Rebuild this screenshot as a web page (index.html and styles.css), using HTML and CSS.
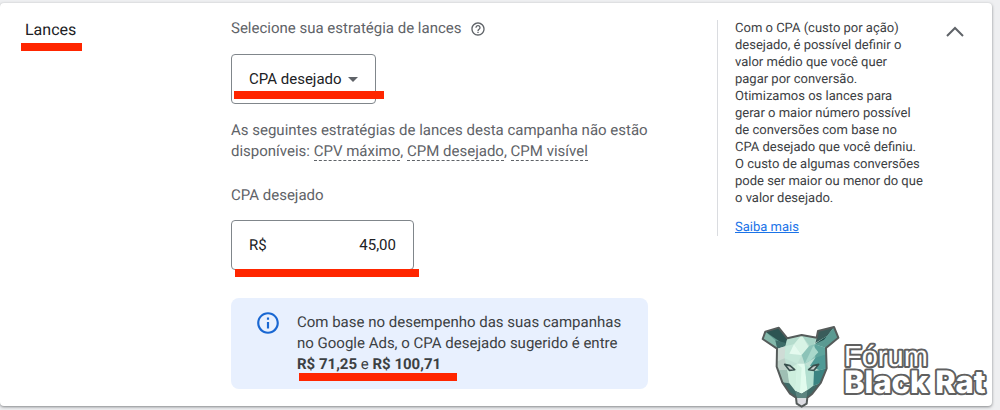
FILE: index.html
```
<!DOCTYPE html>
<html lang="pt-BR">
<head>
    <meta charset="UTF-8">
    <meta name="viewport" content="width=device-width, initial-scale=1.0">
    <title>Lances</title>
    <link rel="stylesheet" href="styles.css">
</head>
<body>
    <section class="card">
        <h2><span class="marked mark-title">Lances</span></h2>

        <!-- Bidding form -->
        <form class="bidding">
            <div class="label-row">
                <label for="strategy">Selecione sua estratégia de lances</label>
                <button type="button" class="icon-button" aria-label="Ajuda">
                    <svg width="16" height="16" viewBox="0 0 24 24" fill="#5f6368">
                        <path d="M11 18h2v-2h-2v2zm1-16C6.480 2 2 6.480 2 12s4.480 10 10 10 10-4.480 10-10S17.520 2 12 2zm0 18c-4.410 0-8-3.590-8-8s3.590-8 8-8 8 3.590 8 8-3.590 8-8 8zm0-14c-2.210 0-4 1.790-4 4h2c0-1.100.9-2 2-2s2 .9 2 2c0 2-3 1.750-3 5h2c0-2.250 3-2.500 3-5 0-2.210-1.790-4-4-4z"/>
                    </svg>
                </button>
            </div>
            <div class="select-box marked mark-select">
                <select id="strategy">
                    <option>CPA desejado</option>
                </select>
                <svg class="arrow" width="10" height="5" viewBox="0 0 10 5"><path d="M0 0h10L5 5z" fill="#5f6368"/></svg>
            </div>
            <p class="unavailable">As seguintes estratégias de lances desta campanha não estão disponíveis: <span class="term">CPV máximo</span>, <span class="term">CPM desejado</span>, <span class="term">CPM visível</span></p>
            <label class="target-label" for="target">CPA desejado</label>
            <div class="money-box marked mark-money">
                <span>R$</span>
                <input type="text" id="target" value="45,00">
            </div>
            <div class="info">
                <svg width="26" height="26" viewBox="0 0 24 24" fill="#1967d2">
                    <path d="M11 7h2v2h-2zM11 11h2v6h-2zM12 2C6.480 2 2 6.480 2 12s4.480 10 10 10 10-4.480 10-10S17.520 2 12 2zm0 18c-4.410 0-8-3.590-8-8s3.590-8 8-8 8 3.590 8 8-3.590 8-8 8z"/>
                </svg>
                <p>Com base no desempenho das suas campanhas no Google Ads, o CPA desejado sugerido é entre<br>
                <span class="marked mark-range"><strong>R$ 71,25</strong> e <strong>R$ 100,71</strong></span></p>
            </div>
        </form>

        <!-- Help text -->
        <aside class="help">
            <p>Com o CPA (custo por ação) desejado, é possível definir o valor médio que você quer<br>pagar por conversão.<br>Otimizamos os lances para<br>gerar o maior número possível<br>de conversões com base no<br>CPA desejado que você definiu.<br>O custo de algumas conversões pode ser maior ou menor do que<br>o valor desejado.</p>
            <a href="#">Saiba mais</a>
        </aside>

        <button type="button" class="icon-button collapse" aria-label="Recolher">
            <svg width="18" height="12" viewBox="0 0 18 12"><path d="M1 10l8-8 8 8" fill="none" stroke="#5f6368" stroke-width="2"/></svg>
        </button>
    </section>

    <!-- Forum logo -->
    <svg class="logo" width="230" height="90" viewBox="0 0 230 90">
        <svg x="-11" y="-3" width="100" height="95" viewBox="0 0 300 285" stroke-linejoin="round">
            <path d="M38 72L46 50 86 38 112 70 155 60 200 68 204 48 252 36 265 68 228 99 230 160 212 204 187 236 172 248 170 266 155 275 140 266 138 248 120 236 97 202 80 155 81 101z" fill="#bfe0d4"/>
            <!-- Ears -->
            <path d="M38 72L46 50 110 84 82 101z" fill="#5f9c90"/>
            <path d="M46 50L86 38 112 70 108 92z" fill="#2c5452"/>
            <path d="M38 72L46 50 76 76 82 101z" fill="#83b8aa"/>
            <path d="M76 76L108 84 106 94 82 101z" fill="#3d6c68"/>
            <path d="M204 48L252 36 232 62 196 84 200 68z" fill="#3a5c5a"/>
            <path d="M252 36L265 68 228 99 194 88 232 62z" fill="#5b9a92"/>
            <path d="M252 36L232 62 194 88 222 74z" fill="#1f4a49"/>
            <!-- Forehead -->
            <path d="M106 94L112 70 155 60 132 88z" fill="#b5dccd"/>
            <path d="M155 60L132 88 118 108 155 120 178 100z" fill="#d8f3e5"/>
            <path d="M155 60L200 68 190 92 178 92z" fill="#a5d3c5"/>
            <path d="M81 101L106 94 104 130 80 140z" fill="#cfdcd6"/>
            <path d="M106 94L132 88 155 120 142 146 104 130z" fill="#c6e8da"/>
            <path d="M178 92L194 88 228 99 196 128 164 146 155 120z" fill="#8cc3b8"/>
            <path d="M194 88L228 99 229 140 196 128z" fill="#5da49c"/>
            <path d="M132 88L155 120 118 116z" fill="#e5faef"/>
            <path d="M190 92L205 112 182 136 164 146z" fill="#a8d8cb"/>
            <!-- Cheeks and snout -->
            <path d="M80 140L104 130 112 165 84 165z" fill="#bccfc7"/>
            <path d="M84 165L112 165 118 205 97 202z" fill="#9fbfb4"/>
            <path d="M112 165L142 146 136 228 118 205z" fill="#cdeedd"/>
            <path d="M142 146L164 146 172 226 155 236 136 228z" fill="#e2fbee"/>
            <path d="M164 146L192 168 192 210 172 226z" fill="#b2dfd0"/>
            <path d="M196 128L229 118 230 160 208 166 180 152z" fill="#4f9a96"/>
            <path d="M208 166L230 160 212 204 190 212 192 168z" fill="#3b8482"/>
            <path d="M142 146L155 158 150 232 136 228z" fill="#d2f2e2"/>
            <path d="M97 202L118 205 136 228 155 236 172 226 190 212 212 204 187 236 172 248 138 248 120 236z" fill="#3f6a67"/>
            <path d="M136 228L155 236 172 226 170 248 140 248z" fill="#5c8580"/>
            <path d="M139 250L171 250 170 266 155 275 140 266z" fill="#dcdce2"/>
            <!-- Eyes -->
            <path d="M104 148L120 152 134 164 118 166zM206 148L190 152 176 164 192 166z" fill="#c9d0ce" stroke="#39504e" stroke-width="5"/>
            <path d="M38 72L46 50 86 38 112 70 155 60 200 68 204 48 252 36 265 68 228 99 230 160 212 204 187 236 172 248 170 266 155 275 140 266 138 248 120 236 97 202 80 155 81 101z" fill="none" stroke="#555b5a" stroke-width="6"/>
        </svg>
        <text class="logo-thin" x="83" y="48">Fórum</text>
        <text class="logo-heavy" x="83" y="75">Black Rat</text>
    </svg>
</body>
</html>
```

FILE: styles.css
```
* {
    box-sizing: border-box;
}
body {
    position: relative;
    margin: 0;
    padding: 3px 8px 4px 0;
    background-color: #eeeff1;
    font-family: Roboto, "Noto Sans", sans-serif;
    font-size: 15px;
    line-height: 21px;
    color: #5f6368;
    text-rendering: geometricPrecision;
}
h2, p {
    margin: 0;
}
.card {
    display: grid;
    grid-template-columns: 206px minmax(0, 417px) minmax(0, 1fr) auto;
    align-items: start;
    padding: 15px 28px 17px 25px;
    background-color: #fff;
    border-radius: 4px;
    box-shadow: 0 1px 3px rgba(60, 64, 67, 0.6);
}
h2 {
    padding-top: 1px;
    font-size: 16px;
    font-weight: 400;
    color: #202124;
}
.bidding {
    display: flex;
    flex-direction: column;
    align-items: flex-start;
}
.label-row {
    display: flex;
    align-items: center;
    gap: 8px;
    margin-bottom: 15px;
}
.icon-button {
    display: flex;
    padding: 0;
    border: none;
    background: none;
    cursor: pointer;
}
.select-box, .money-box {
    display: flex;
    align-items: center;
    height: 50px;
    border: 1px solid #80868b;
    border-radius: 4px;
    color: #202124;
}
select, input {
    font: inherit;
    color: inherit;
    border: none;
    background: none;
    outline: none;
}
select {
    appearance: none;
    height: 100%;
    padding: 0 33px 0 17px;
    cursor: pointer;
}
.arrow {
    margin-left: -27px;
    margin-right: 17px;
    pointer-events: none;
}
.unavailable {
    margin: 16px 0 23px;
}
.term {
    border-bottom: 1px dashed #5f6368;
}
.target-label {
    margin-bottom: 14px;
}
.money-box {
    width: 183px;
    padding: 0 17px;
}
.money-box input {
    flex: 1;
    min-width: 0;
    padding: 0;
    text-align: right;
}
.info {
    display: flex;
    align-items: flex-start;
    gap: 16px;
    width: 100%;
    margin-top: 28px;
    padding: 14px 20px 14px 24px;
    border-radius: 8px;
    background-color: #e8f0fe;
    color: #3c4043;
}
.info svg {
    flex: none;
    margin-top: -2px;
}
.help {
    margin: 2px 16px 0 69px;
    padding-left: 17px;
    border-left: 1px solid #dadce0;
    font-size: 13px;
    line-height: 17px;
    color: #3c4043;
}
.help a {
    display: inline-block;
    margin: 12px 0 0;
    color: #1a73e8;
}
.collapse {
    margin-top: 8px;
}

/* Red marker strokes */
.marked {
    position: relative;
}
.marked::after {
    content: "";
    position: absolute;
    height: 8px;
    background-color: #ff2600;
    pointer-events: none;
}
.mark-title::after {
    left: -4px;
    right: -6px;
    top: 23px;
}
.mark-select::after {
    left: 2px;
    right: -9px;
    bottom: 4px;
}
.mark-money::after {
    left: 3px;
    right: -6px;
    bottom: -8px;
}
.mark-range::after {
    left: 2px;
    right: -16px;
    top: 18px;
}

.logo {
    position: absolute;
    right: 9px;
    bottom: 2px;
    overflow: visible;
}
.logo text {
    fill: #fff;
    stroke: #606060;
    stroke-linejoin: round;
    paint-order: stroke;
}
.logo-thin {
    font-family: "Liberation Sans", sans-serif;
    font-size: 29px;
    stroke-width: 4px;
}
.logo-heavy {
    font-family: Inter, sans-serif;
    font-size: 31px;
    font-weight: 800;
    stroke-width: 4px;
}
```
